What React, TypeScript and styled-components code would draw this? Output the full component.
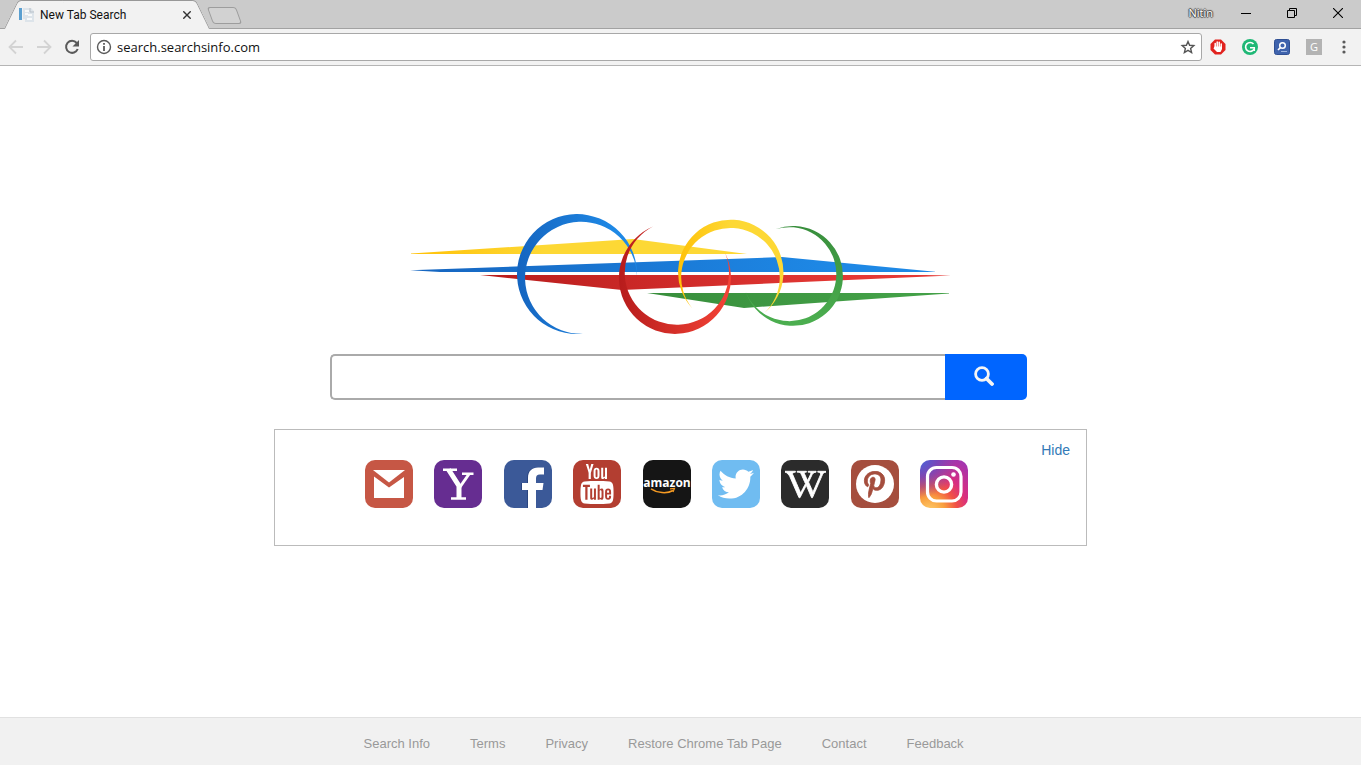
import React from "react";
import styled, { createGlobalStyle } from "styled-components";
import { FaTwitter, FaWikipediaW, FaPinterestP } from "react-icons/fa";
import { TfiYoutube } from "react-icons/tfi";

const GlobalStyle = createGlobalStyle`
  *, *::before, *::after { box-sizing: border-box; }
  body {
    margin: 0;
    background: #fff;
    font-family: "Liberation Sans", Arial, sans-serif;
    font-size: 14px;
  }
  button { padding: 0; border: 0; background: none; cursor: pointer; }
  a { text-decoration: none; }
  svg { display: block; }
`;

const uiFont = `"Open Sans", "Segoe UI", sans-serif`;

const Page = styled.div`
  display: flex;
  flex-direction: column;
  min-height: 100vh;
`;

/* Browser window */

const TitleBar = styled.header`
  display: flex;
  height: 29px;
  padding-left: 11px;
  background: #cbcbcb;
  border-bottom: 1px solid #a2a2a2;
`;

const Tab = styled.div`
  position: relative;
  display: flex;
  align-items: center;
  gap: 5px;
  width: 192px;
  height: 29px;
  padding: 1px 8px 0 7px;
  font: 12px/16px Roboto, "Segoe UI", sans-serif;
  color: #111;

  &::before,
  &::after {
    content: "";
    position: absolute;
    top: 0;
    bottom: 0;
    background: #f2f2f2;
    border: 0 solid #989898;
    border-top-width: 1px;
  }
  &::before {
    left: 0;
    right: 30%;
    border-left-width: 1px;
    border-top-left-radius: 4px;
    transform: skewX(-26deg);
  }
  &::after {
    left: 30%;
    right: 0;
    border-right-width: 1px;
    border-top-right-radius: 4px;
    transform: skewX(26deg);
  }
  > * { position: relative; z-index: 1; }
`;

const TabTitle = styled.span`
  flex: 1;
  white-space: nowrap;
`;

const CloseTab = styled.button`
  display: grid;
  place-items: center;
  width: 16px;
  height: 16px;
`;

const NewTab = styled.button`
  width: 29px;
  height: 17px;
  margin: 7px 0 0 7px;
  border: 1px solid #9d9d9d;
  border-radius: 3px;
  background: #d2d2d2;
  transform: skewX(20deg);
`;

const WindowControls = styled.div`
  display: flex;
  align-items: center;
  margin-left: auto;
  height: 26px;
`;

const Profile = styled.button`
  margin-right: 10px;
  font: 11px/16px ${uiFont};
  color: #fff;
  text-shadow: 1px 0 1px #444, -1px 0 1px #444, 0 1px 1px #444, 0 -1px 1px #444;
`;

const WindowButton = styled.button`
  display: grid;
  place-items: center;
  width: 46px;
  height: 26px;
`;

const Toolbar = styled.nav`
  display: flex;
  align-items: center;
  padding: 4px 3px 4px 2px;
  background: #f2f2f2;
  border-bottom: 1px solid #b5b5b5;
`;

const ToolButton = styled.button<{ $width: number }>`
  display: grid;
  place-items: center;
  flex: none;
  width: ${(p) => p.$width}px;
  height: 28px;
`;

const AddressBar = styled.div`
  display: flex;
  flex: 1;
  align-items: center;
  height: 28px;
  margin-left: 4px;
  padding: 0 5px;
  gap: 5px;
  background: #fff;
  border: 1px solid #a8a8a8;
  border-radius: 3px;
`;

const AddressInput = styled.input`
  flex: 1;
  min-width: 0;
  height: 24px;
  padding: 0;
  border: 0;
  outline: 0;
  background: transparent;
  font: 13px/20px ${uiFont};
  color: #111;
`;

const GrayBadge = styled.span`
  display: grid;
  place-items: center;
  width: 16px;
  height: 16px;
  background: #b3b3b3;
  font: 11px/16px ${uiFont};
  color: #fff;
`;

/* Search page */

const Main = styled.main`
  display: flex;
  flex-direction: column;
  flex: 1;
  width: 100%;
  max-width: 813px;
  margin: 0 auto;
  padding: 146px 0 40px;
`;

const Logo = styled.svg`
  align-self: center;
  width: 541px;
  max-width: 100%;
  height: 124px;
`;

const SearchForm = styled.form`
  display: flex;
  height: 46px;
  margin: 18px 60px 0 56px;
`;

const SearchInput = styled.input`
  flex: 1;
  min-width: 0;
  padding: 0 12px;
  border: 2px solid #aaa;
  border-right: 0;
  border-radius: 5px 0 0 5px;
  outline: 0;
  font: 16px/20px "Liberation Sans", Arial, sans-serif;
`;

const SearchButton = styled.button`
  display: grid;
  place-items: center;
  width: 82px;
  padding: 0 4px 2px 0;
  border-radius: 0 5px 5px 0;
  background: #0065ff;
`;

const Shortcuts = styled.section`
  margin-top: 29px;
  padding: 11px 16px 37px;
  border: 1px solid #bbb;
`;

const ShortcutsHeader = styled.div`
  display: flex;
  justify-content: flex-end;
  line-height: 19px;
`;

const HideLink = styled.a`
  color: #337ab7;
`;

const TileRow = styled.div`
  display: flex;
  justify-content: space-between;
  padding: 0 102px 0 74px;
`;

const Tile = styled.a<{ $bg: string }>`
  display: grid;
  place-items: center;
  width: 48px;
  height: 48px;
  border-radius: 10px;
  overflow: hidden;
  background: ${(p) => p.$bg};
  color: #fff;
`;

const FacebookTile = styled(Tile)`
  place-items: end;
  padding-right: 4px;
  svg { filter: drop-shadow(-1px 0 0 #2a4580); }
`;

const WikipediaTile = styled(Tile)`
  svg { stroke: #fff; stroke-width: 14px; }
`;

const PinDisc = styled.span`
  display: grid;
  place-items: center;
  width: 38px;
  height: 38px;
  border-radius: 50%;
  background: #fff;
  color: #a54e3e;
  svg { stroke: #a54e3e; stroke-width: 16px; }
`;

const Footer = styled.footer`
  display: flex;
  gap: 40px;
  height: 48px;
  padding: 4px 16px 0;
  padding-left: calc(50% - 317px);
  align-items: center;
  background: #f1f1f1;
  border-top: 1px solid #e1e1e1;
  a { font-size: 13px; line-height: 16px; color: #999; white-space: nowrap; }
`;

const Gradient = ({ id, from, to, end = 0.8 }: { id: string; from: string; to: string; end?: number }) => (
  <linearGradient id={id} x1="0" y1="0" x2="1" y2="0">
    <stop offset="0" stopColor={from} />
    <stop offset={end} stopColor={to} />
  </linearGradient>
);

const RingsLogo = () => (
  <Logo viewBox="410 212 541 124" role="img" aria-label="Search Info">
    <defs>
      <Gradient id="blue" from="#1565c0" to="#1e88e5" />
      <Gradient id="red" from="#b71c1c" to="#e53935" />
      <Gradient id="ringRed" from="#b71c1c" to="#f44336" end={1} />
      <Gradient id="yellow" from="#ffc107" to="#fdd835" end={0.5} />
      <Gradient id="wedgeYellow" from="#ffc107" to="#fdd835" end={0.4} />
      <Gradient id="green" from="#388e3c" to="#43a047" />
      <linearGradient id="ringGreen" x1="0" y1="0" x2="0" y2="1">
        <stop offset="0" stopColor="#388e3c" />
        <stop offset="1" stopColor="#4caf50" />
      </linearGradient>
    </defs>
    <path fill="url(#wedgeYellow)" d="M411 253.6 L633 239 L747 254 H411Z" />
    <path fill="url(#blue)" d="M410 270.3 L782 257 L935 271.8 V272 H440Z" />
    <path fill="url(#red)" d="M480 275 H925 L951 275.6 L622 290Z" />
    <path fill="url(#green)" d="M647 293 H949 V293.6 L744 308Z" />
    <path fill="url(#blue)" d="M637 275.7 A60 60 0 1 0 583 333.8 A56 56 0 1 1 637 275.7Z" />
    <path fill="url(#yellow)" d="M692.2 308.3 A52.7 52.7 0 1 1 764.6 312.8 A49.3 49.3 0 1 0 692.2 308.3Z" />
    <path fill="url(#ringRed)" d="M653 226.4 A56 56 0 1 0 725.1 253 A52.1 52.1 0 1 1 653 226.4Z" />
    <path fill="url(#ringGreen)" d="M775.9 229.1 A49.9 49.9 0 1 1 745.7 291.7 A47 47 0 1 0 775.9 229.1Z" />
  </Logo>
);

const shortcuts = (
  <>
    <Tile href="#gmail" aria-label="Gmail" $bg="#c65745">
      <svg width="48" height="48" viewBox="0 0 48 48" fill="#fff">
        <path d="M8 10H40L24 22.500Z" />
        <path d="M9 16.500L24 27.500L39 17V38H9Z" />
      </svg>
    </Tile>
    <Tile href="#yahoo" aria-label="Yahoo" $bg="#662d91">
      <svg width="48" height="48" viewBox="0 0 48 48">
        <g fill="none" stroke="#fff">
          <path strokeWidth="5" d="M14.500 9.500L25 26V39" />
          <path strokeWidth="3" d="M35 14L26 27" />
          <path strokeWidth="2.400" d="M9 9.700H23M28 13.800H39.500M17 38.500H32" />
        </g>
      </svg>
    </Tile>
    <FacebookTile href="#facebook" aria-label="Facebook" $bg="#3b5998">
      <svg width="28" height="48" viewBox="0 0 28 48">
        <path
          fill="#fff"
          d="M8 48V30H2V23H8V18C8 11 12 7.500 18 7.500H24V14.500H20C17 14.500 16 16 16 18.500V23H23.500L22.500 30H16V48Z"
        />
      </svg>
    </FacebookTile>
    <Tile href="#youtube" aria-label="YouTube" $bg="#b33e31">
      <TfiYoutube size={40} />
    </Tile>
    <Tile href="#amazon" aria-label="Amazon" $bg="#151515">
      <svg width="48" height="48" viewBox="0 0 48 48">
        <text x="24" y="27" textAnchor="middle" fontFamily="Open Sans, sans-serif" fontWeight="700" fontSize="12" fill="#fff">
          amazon
        </text>
        <path d="M8 28.800C14 33 24 34 30 30.500" fill="none" stroke="#f59a23" strokeWidth="1.500" />
        <path d="M27 28.800L31.500 28.500L30 32" fill="none" stroke="#f59a23" strokeWidth="1.200" />
      </svg>
    </Tile>
    <Tile href="#twitter" aria-label="Twitter" $bg="#70bcf1">
      <FaTwitter size={36} />
    </Tile>
    <WikipediaTile href="#wikipedia" aria-label="Wikipedia" $bg="#2b2b2b">
      <FaWikipediaW size={41} />
    </WikipediaTile>
    <Tile href="#pinterest" aria-label="Pinterest" $bg="#a54e3e">
      <PinDisc><FaPinterestP size={27} /></PinDisc>
    </Tile>
    <Tile
      href="#instagram"
      aria-label="Instagram"
      $bg="radial-gradient(circle at 0% 0%, #4a64d8 0%, rgba(90, 80, 200, 0.7) 25%, rgba(150, 50, 180, 0) 55%), radial-gradient(circle at 20% 110%, #fed373 0%, #f9a03f 24%, #f15245 42%, #d92e7f 60%, #a435b0 92%, #8a3ab9 110%)"
    >
      <svg width="48" height="48" viewBox="0 0 48 48" fill="none" stroke="#fff">
        <rect x="7.500" y="7.500" width="33.500" height="33.500" rx="9" strokeWidth="3.200" />
        <circle cx="24" cy="24.500" r="7.600" strokeWidth="3.400" />
        <circle cx="33.500" cy="14.500" r="2.300" fill="#fff" stroke="none" />
      </svg>
    </Tile>
  </>
);

const footerLinks = ["Search Info", "Terms", "Privacy", "Restore Chrome Tab Page", "Contact", "Feedback"];

export default function App() {
  return (
    <Page>
      <GlobalStyle />
      <TitleBar>
        <Tab>
          <svg width="17" height="16" viewBox="0 0 17 16">
            <rect x="1" y="1" width="3" height="12" fill="#5a9fd0" />
            <path d="M5 1H13L16 4V15H7V12H5Z" fill="#dde4ea" />
            <path d="M7 4H11M7 7H10M10 8H14M9 12H14" stroke="#fff" strokeWidth="1.500" />
            <path d="M12 1V5H16" fill="none" stroke="#b8c0c8" />
          </svg>
          <TabTitle>New Tab Search</TabTitle>
          <CloseTab aria-label="Close tab">
            <svg width="8" height="8" viewBox="0 0 8 8" stroke="#333" strokeWidth="1.400">
              <path d="M0.300 0.300L7.700 7.700M7.700 0.300L0.300 7.700" />
            </svg>
          </CloseTab>
        </Tab>
        <NewTab aria-label="New tab" />
        <WindowControls>
          <Profile>Nitin</Profile>
          <WindowButton aria-label="Minimize">
            <svg width="10" height="10" viewBox="0 0 10 10" stroke="#000"><path d="M0 5.500H10" /></svg>
          </WindowButton>
          <WindowButton aria-label="Restore">
            <svg width="10" height="10" viewBox="0 0 10 10" stroke="#000" fill="none">
              <path d="M0.500 2.500H7.500V9.500H0.500ZM2.500 2.500V0.500H9.500V7.500H7.500" />
            </svg>
          </WindowButton>
          <WindowButton aria-label="Close">
            <svg width="10" height="10" viewBox="0 0 10 10" stroke="#000" strokeWidth="1.100"><path d="M0 0L10 10M10 0L0 10" /></svg>
          </WindowButton>
        </WindowControls>
      </TitleBar>
      <Toolbar>
        <ToolButton $width={28} aria-label="Back">
          <svg width="16" height="16" viewBox="0 0 16 16" fill="none" stroke="#d3d3d3" strokeWidth="1.800">
            <path d="M15 8H2M8 1.500L1.500 8L8 14.500" />
          </svg>
        </ToolButton>
        <ToolButton $width={28} aria-label="Forward">
          <svg width="16" height="16" viewBox="0 0 16 16" fill="none" stroke="#d3d3d3" strokeWidth="1.800">
            <path d="M1 8H14M8 1.500L14.500 8L8 14.500" />
          </svg>
        </ToolButton>
        <ToolButton $width={28} aria-label="Reload">
          <svg width="16" height="16" viewBox="0 0 16 16">
            <path d="M12.700 4A6 6 0 1 0 13.700 10" fill="none" stroke="#5a5a5a" strokeWidth="2" />
            <path d="M15 1V7.500H8.500Z" fill="#5a5a5a" />
          </svg>
        </ToolButton>
        <AddressBar>
          <svg width="16" height="16" viewBox="0 0 16 16" fill="none" stroke="#5a5a5a">
            <circle cx="8" cy="8" r="6.500" strokeWidth="1.400" />
            <path d="M8 7V12M8 4V5.800" strokeWidth="1.800" />
          </svg>
          <AddressInput aria-label="Address" defaultValue="search.searchsinfo.com" />
          <svg width="16" height="16" viewBox="0 0 16 16" fill="none" stroke="#555" strokeWidth="1.400">
            <path d="M8 2.500L9.600 6.300L13.800 6.600L10.600 9.400L11.600 13.500L8 11.300L4.400 13.500L5.400 9.400L2.200 6.600L6.400 6.300Z" />
          </svg>
        </AddressBar>
        <ToolButton $width={32} aria-label="Ad blocker">
          <svg width="16" height="16" viewBox="0 0 16 16">
            <path d="M5 0.500H11L15.500 5V11L11 15.500H5L0.500 11V5Z" fill="#e1231f" />
            <path
              d="M5.200 8.500V4.500M7.200 8V3M9.200 8V3.200M11.200 8.500V5"
              stroke="#fff"
              strokeWidth="1.500"
              strokeLinecap="round"
            />
            <path d="M4.500 7.500H12V10L10.500 13H7L3.500 9.500Z" fill="#fff" />
          </svg>
        </ToolButton>
        <ToolButton $width={32} aria-label="Writing assistant">
          <svg width="16" height="16" viewBox="0 0 16 16">
            <circle cx="8" cy="8" r="8" fill="#1fb876" />
            <path d="M11.500 5A4.500 4.500 0 1 0 12 10.200" fill="none" stroke="#fff" strokeWidth="1.600" />
            <path d="M8 8.800H12.300V12" fill="none" stroke="#fff" strokeWidth="1.500" />
          </svg>
        </ToolButton>
        <ToolButton $width={32} aria-label="Search extension">
          <svg width="16" height="16" viewBox="0 0 16 16">
            <rect x="0.500" y="0.500" width="15" height="15" rx="2" fill="#3f63ad" stroke="#2f4f93" />
            <circle cx="8.500" cy="6.500" r="2.800" fill="none" stroke="#fff" strokeWidth="1.500" />
            <path d="M6.500 8.500L4 11" stroke="#fff" strokeWidth="1.700" />
            <path d="M7 12.500H13" stroke="#9bb3e0" />
          </svg>
        </ToolButton>
        <ToolButton $width={32} aria-label="G extension"><GrayBadge>G</GrayBadge></ToolButton>
        <ToolButton $width={28} aria-label="Menu">
          <svg width="4" height="14" viewBox="0 0 4 14" fill="#5a5a5a">
            <circle cx="2" cy="2" r="1.600" /><circle cx="2" cy="7" r="1.600" /><circle cx="2" cy="12" r="1.600" />
          </svg>
        </ToolButton>
      </Toolbar>

      <Main>
        <RingsLogo />
        <SearchForm role="search" onSubmit={(e: React.FormEvent) => e.preventDefault()}>
          <SearchInput type="text" aria-label="Search the web" />
          <SearchButton aria-label="Search">
            <svg width="20" height="20" viewBox="0 0 20 20" fill="none" stroke="#f5f5f5">
              <circle cx="8" cy="8" r="6.400" strokeWidth="2.800" />
              <path d="M12.500 12.500L18 18" strokeWidth="3.800" strokeLinecap="round" />
            </svg>
          </SearchButton>
        </SearchForm>
        <Shortcuts aria-label="Shortcuts">
          <ShortcutsHeader><HideLink href="#hide">Hide</HideLink></ShortcutsHeader>
          <TileRow>{shortcuts}</TileRow>
        </Shortcuts>
      </Main>

      <Footer>
        {footerLinks.map((label) => (
          <a key={label} href="#footer">{label}</a>
        ))}
      </Footer>
    </Page>
  );
}
